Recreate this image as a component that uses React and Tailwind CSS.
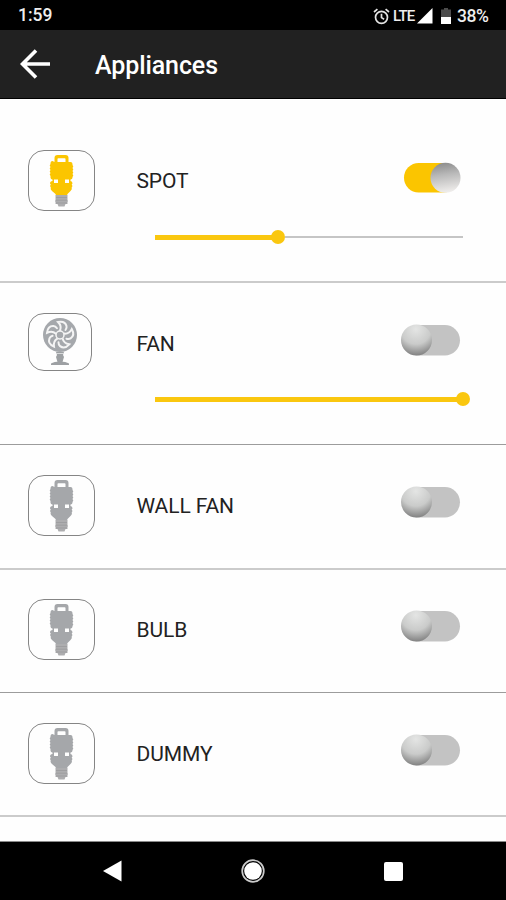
const appliances = [
  { name: 'SPOT', icon: 'bulb', on: true, level: 40, row: 'h-[163px] border-b-2 border-[#cbcbcb]' },
  { name: 'FAN', icon: 'fan', on: false, level: 100, row: 'h-[162px] border-b border-[#9c9c9c]' },
  { name: 'WALL FAN', icon: 'bulb', on: false, row: 'h-[125px] border-b-2 border-[#cbcbcb] -mb-px' },
  { name: 'BULB', icon: 'bulb', on: false, row: 'h-[124px] border-b border-[#9c9c9c]' },
  { name: 'DUMMY', icon: 'bulb', on: false, row: 'h-[124px] border-b-2 border-[#cbcbcb]' },
]

function StatusBar() {
  return (
    <div className="h-[30px] bg-black text-[#eeeeee] flex items-center pl-[18px] pr-[17px] pt-[2px] font-medium">
      <span className="text-[17.5px] leading-none">1:59</span>
      <svg className="ml-auto" width="17" height="17" viewBox="0 0 17 17" fill="none" stroke="#e4e4e4" strokeWidth="1.7">
        <circle cx="8.5" cy="9.3" r="6" />
        <path d="M8.5 5.8v3.8l2.6 1.6M1 4l3.4-2.8M16 4l-3.4-2.8" />
      </svg>
      <span className="text-[15px] leading-none ml-[3px] w-[22px] tracking-[-0.8px]">LTE</span>
      <svg className="ml-[2px]" width="16" height="16" viewBox="0 0 16 16">
        <path d="M15.5 0v15.5H0z" fill="#fff" />
      </svg>
      <svg className="ml-[8px]" width="10" height="16" viewBox="0 0 10 16">
        <path d="M3 0h4v1.5h3V9H0V1.5h3z" fill="#4c4c4c" />
        <path d="M0 9h10v7H0z" fill="#fff" />
      </svg>
      <span className="text-[17.5px] leading-none ml-[6px] mt-px w-[32px] tracking-[-0.4px]">38%</span>
    </div>
  )
}

function BulbIcon({ on }) {
  const color = on ? '#fbc500' : '#a5a7aa'
  return (
    <svg width="28" height="54" viewBox="0 0 28 54">
      <path
        d="M6.5 8V4q0-3 3-3h8q3 0 3 3v4h2q2 0 2 2v1l.8 1.500-.8 1.500.8 1.500-.8 1.500.8 1.500-.8 1.500.8 1.500-.8 1.500v.5q0 2-2 2h-18q-2 0-2-2V22l-.8-1.500.8-1.500-.8-1.500.8-1.500-.8-1.500.8-1.500-.8-1.500.8-1.500v-1q0-2 2-2zM9.500 5v3h8V5q0-.8-.8-.8h-6.400q-.8 0-.8.8z"
        fill={color}
        fillRule="evenodd"
      />
      <path
        d="M4.500 24H6v5h4v-5h7v5h4v-5h1.500v3q2 0 2 2.500l-.8 1 .8 1.500-.8 1.500q.8 1.500-1.200 3.500L19.500 40l-.5 1.500H8L7.500 40 4 37q-2-2-1.200-3.500L2 32l.8-1.500-.8-1Q2 27 4.500 27z"
        fill={color}
      />
      <path d="M7.5 41h12v5l.5 1-.5 1v2h-2l-1 2.500h-6l-1-2.500h-2v-2L7 47l.5-1z" fill="#adadaf" />
      <path d="M8 43.5h11M8 46.2h11M8 49h11" stroke="#949496" strokeWidth=".6" />
    </svg>
  )
}

function FanIcon() {
  return (
    <svg width="36" height="50" viewBox="0 0 36 50">
      <circle cx="18" cy="18" r="17" fill="#a5a8ac" />
      <g fill="none" stroke="#f4f4f4" strokeWidth="2" strokeLinecap="round">
        {[0, 72, 144, 216, 288].map((angle) => (
          <path key={angle} d="M18 13.5Q20 9 16 5Q23 3.5 24.5 9Q25 11 23.5 13" transform={`rotate(${angle} 18 18)`} />
        ))}
        <circle cx="18" cy="18" r="4" fill="#a5a8ac" strokeWidth="1.5" />
      </g>
      <path d="M14 35h8l-1 3 1 2-1.500 5h-5L14 40l1-2z" fill="#9da0a3" />
      <path d="M14.5 36.5h7" stroke="#fff" strokeWidth=".6" />
      <path d="M9 46.5q3-2 9-2t9 2V48H9z" fill="#9da0a3" />
    </svg>
  )
}

function Toggle({ on }) {
  return (
    <svg className="block" width="62" height="36" viewBox="0 0 62 36">
      <defs>
        <linearGradient id="knob-on" x1=".4" y1="0" x2=".55" y2="1">
          <stop offset="0" stopColor="#8d8d8d" />
          <stop offset=".4" stopColor="#b9b9b9" />
          <stop offset="1" stopColor="#f1efed" />
        </linearGradient>
        <radialGradient id="knob-off" cx=".48" cy=".15" r=".88">
          <stop offset="0" stopColor="#e4e5e4" />
          <stop offset=".55" stopColor="#cacbca" />
          <stop offset="1" stopColor="#7c7c7c" />
        </radialGradient>
      </defs>
      {on ? (
        <>
          <rect x="4" y="4" width="54" height="29.5" rx="14.75" fill="#fbc500" />
          <circle cx="45.5" cy="18.8" r="15" fill="url(#knob-on)" />
        </>
      ) : (
        <>
          <rect x="3" y="3" width="57" height="30.5" rx="15.25" fill="#c3c3c3" />
          <circle cx="16.5" cy="18" r="15.5" fill="url(#knob-off)" />
        </>
      )}
    </svg>
  )
}

function Slider({ level }) {
  return (
    <div className="ml-[155px] w-[315px] h-[14px] flex items-center">
      <div className="h-[5px] bg-[#fac70f]" style={{ width: 308 * (level / 100) - 6 }} />
      <div className="size-[14px] -ml-px rounded-full bg-[#fac70f] shrink-0" />
      {level < 100 && <div className="h-[2px] flex-1 mr-[7px] bg-[#c5c5c5]" />}
    </div>
  )
}

function ApplianceRow({ item }) {
  const fan = item.icon === 'fan'
  return (
    <li className={`${item.row} pt-[30px]`}>
      <div className="flex items-start h-[62px] pl-[28px]">
        <div className={`${fan ? 'w-[64px] h-[58px]' : 'w-[67px] h-[61px]'} border border-[#858585] rounded-[16px] flex items-center justify-center shrink-0`}>
          {fan ? <FanIcon /> : <BulbIcon on={item.on} />}
        </div>
        <span className={`${fan ? 'ml-[44.5px]' : 'ml-[41.5px]'} mt-[18px] text-[21px] leading-[26px] tracking-[-0.1px] text-[#222222] whitespace-nowrap`}>
          {item.name}
        </span>
        <div className="ml-auto mr-[44px] mt-[9px]">
          <Toggle on={item.on} />
        </div>
      </div>
      {item.level && (
        <div className={fan ? 'pt-[17px]' : 'pt-[18px]'}>
          <Slider level={item.level} />
        </div>
      )}
    </li>
  )
}

export default function App() {
  return (
    <div className="w-[506px] h-[900px] flex flex-col overflow-hidden bg-[#fefefe] font-['Roboto',sans-serif]">
      <StatusBar />
      <header className="h-[69px] bg-[#212121] border-b border-black flex items-center pl-[20px] text-white">
        <svg width="31" height="30" viewBox="0 0 31 30" fill="none" stroke="#fff" strokeWidth="3.6">
          <path d="M30 15H3M16 1.5L2.5 15 16 28.5" />
        </svg>
        <h1 className="ml-[44px] mt-[3px] text-[25px] leading-none font-medium tracking-[-0.1px]">Appliances</h1>
      </header>
      <ul className="flex-1 pt-[21px] border-b border-[#8a8a8a]">
        {appliances.map((item) => (
          <ApplianceRow key={item.name} item={item} />
        ))}
      </ul>
      <nav className="h-[58px] bg-black flex items-center pl-[103px]">
        <svg width="19" height="22" viewBox="0 0 19 22">
          <path d="M18.5.5v21L0 11z" fill="#fff" />
        </svg>
        <svg className="ml-[119px]" width="24" height="24" viewBox="0 0 24 24">
          <circle cx="12" cy="12" r="10.8" fill="none" stroke="#ccc" strokeWidth="1.7" />
          <circle cx="12" cy="12" r="8.8" fill="#fff" />
        </svg>
        <div className="ml-[119px] size-[19px] rounded-[2px] bg-white" />
      </nav>
    </div>
  )
}
